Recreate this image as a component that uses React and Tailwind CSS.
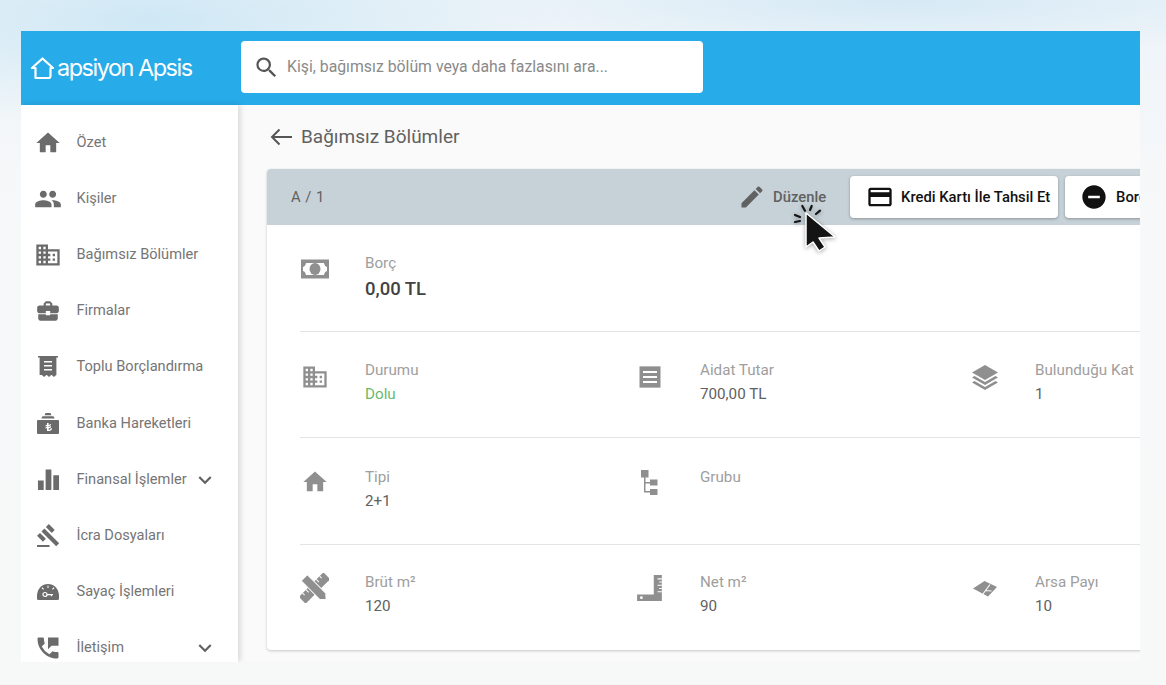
import React from "react";
import {
    MdHome, MdPeople, MdDomain, MdBusinessCenter, MdGavel, MdPermPhoneMsg,
    MdExpandMore, MdSearch, MdEdit, MdCreditCard, MdRemoveCircle,
} from "react-icons/md";

const ReceiptIcon = ({size = 24}) => (
    <svg width={size} height={size} viewBox="0 0 24 24" fill="currentColor">
        <path d="M2 1h20v1.400h-1.600V20c-1 0-1.400 1.800-2.400 1.800S16.400 20 15.400 20s-1.400 1.800-2.400 1.800S11.600 20 10.600 20s-1.400 1.800-2.400 1.800S6.600 20 5.600 20c-.6 0-1 0-2 0V2.400H2z"/>
        <path fill="#fff" d="M8 6h8v1.600H8zM8 10h8v1.600H8zM8 14h8v1.600H8z"/>
    </svg>
);

const BankIcon = ({size = 24}) => (
    <svg width={size} height={size} viewBox="0 0 24 24" fill="currentColor">
        <path d="M9.500 1h5l1 2.200h-7zM6.500 4.200h11l1.200 2.200H5.300zM2 8h20a1 1 0 0 1 1 1v12a1 1 0 0 1-1 1H2a1 1 0 0 1-1-1V9a1 1 0 0 1 1-1z"/>
        <path fill="#fff" d="M11 11h1.600v2l2.400-1v1.300l-2.400 1v.8l2.400-1v1.300l-2.400 1v1.300c1.300 0 2-.6 2.200-1.500h1.300c-.2 1.700-1.600 2.900-3.500 2.900H11v-3l-1.500.6v-1.300l1.500-.6v-.8l-1.500.6v-1.300l1.500-.6z"/>
    </svg>
);

const BarsIcon = ({size = 24}) => (
    <svg width={size} height={size} viewBox="0 0 24 24" fill="currentColor">
        <path d="M1 13h6v10H1zM9 1.500h6V23H9zM17 7.500h6V23h-6z"/>
    </svg>
);

const MeterIcon = ({size = 24}) => (
    <svg width={size} height={size} viewBox="0 0 24 24" fill="currentColor">
        <path d="M12 4C6 4 1.500 8.500 1 15v3.500A1.500 1.500 0 0 0 2.500 20h19a1.500 1.500 0 0 0 1.500-1.500V15C22.500 8.500 18 4 12 4z"/>
        <path fill="#fff" d="M11.500 5.500h1v2.500h-1zM5.500 8l.8-.7 1.700 1.800-.8.7zM18.500 8l-.8-.7-1.700 1.800.8.7z"/>
        <circle cx="9" cy="14.500" r="2" fill="none" stroke="#fff" strokeWidth="1.200"/>
        <path fill="#fff" d="M11 14h6v1.200h-1v1h-1.200v-1H11z"/>
    </svg>
);

const MoneyIcon = ({size = 28}) => (
    <svg width={size} height={size} viewBox="0 0 28 28" fill="currentColor">
        <path d="M0 4.500h28v19H0z"/>
        <path fill="#fff" d="M5 8h18c.4 2.500 1.500 3.500 3 4v4c-1.500.5-2.600 1.500-3 4H5c-.4-2.500-1.500-3.500-3-4v-4c1.500-.5 2.600-1.500 3-4z"/>
        <ellipse cx="14" cy="14" rx="5.500" ry="6"/>
    </svg>
);

const AidatIcon = ({size = 24}) => (
    <svg width={size} height={size} viewBox="0 0 24 24" fill="currentColor">
        <path d="M1.500 1h21v22h-21z"/>
        <path stroke="#fff" strokeWidth="0.800" strokeDasharray="1 1" d="M1.500 1.400h21M1.500 22.600h21"/>
        <path fill="#fff" d="M5 6h14v2H5zM5 11h14v2H5zM5 16h14v2H5z"/>
    </svg>
);

const LayersIcon = ({size = 28}) => (
    <svg width={size} height={size} viewBox="0 0 28 28" fill="currentColor">
        <path d="M14 2 27 9.500 14 17 1 9.500z"/>
        <path d="M3.500 13 14 19l10.500-6 2.500 1.600L14 22 1 14.600z"/>
        <path d="M3.500 18 14 24l10.500-6 2.500 1.600L14 27 1 19.600z"/>
    </svg>
);

const TreeIcon = ({size = 26}) => (
    <svg width={size} height={size} viewBox="0 0 26 26" fill="currentColor">
        <path d="M4 1h7.500v7.500H4zM13 10.500h7.500V16.500H13zM13 20h7.500v6H13z"/>
        <path d="M7 8h1.500v5H13v1.500H8.500V22H13v1.500H7z"/>
    </svg>
);

const PencilRulerIcon = ({size = 30}) => (
    <svg width={size} height={size} viewBox="0 0 30 30" fill="currentColor">
        <g transform="rotate(45 15 15)">
            <path d="M10 -3h10v36H10z"/>
            <path fill="#fff" d="M10 2h3v1h-3zM10 7h4v1h-4zM10 22h4v1h-4zM10 27h3v1h-3z"/>
        </g>
        <g transform="rotate(-45 15 15)">
            <path stroke="#fff" strokeWidth="1" d="M10.500 0h9v27l-4.500 5-4.500-5z"/>
        </g>
    </svg>
);

const SquareRulerIcon = ({size = 28}) => (
    <svg width={size} height={size} viewBox="0 0 26 26" fill="currentColor">
        <path d="M16.500 1H24v24H1v-6h15.500z"/>
        <path fill="#fff" d="M20 4h4v1h-4zM21.500 7H24v1h-2.500zM20 10h4v1h-4zM21.500 13H24v1h-2.500zM20 16h4v1h-4z"/>
        <circle cx="5" cy="22" r="1.300" fill="#fff"/>
    </svg>
);

const LandIcon = ({size = 26}) => (
    <svg width={size} height={size} viewBox="0 0 26 26" fill="currentColor">
        <path d="M1 13.500 12.500 6 25 12 16 21.500z"/>
        <path fill="none" stroke="#fff" strokeWidth="1.100" d="M13.500 15.500 18 9.500M13.500 15.500l6 .5M13.500 15.500 11 19"/>
    </svg>
);

const CursorIcon = () => (
    <svg width="46" height="54" viewBox="0 0 46 54" className="drop-shadow-[0_1px_2px_rgba(0,0,0,0.35)]">
        <path d="M15 12 L15 46 L22 41 L28 50 L34 46 L28 37 L44 36 Z" fill="#141414" stroke="#fff" strokeWidth="1.500" strokeLinejoin="round"/>
        <path d="M4 14l5 2M4 21l5-1M11.300 5 14 9.700M20.700 5 19 9M29 9.700 25 13" stroke="#141414" strokeWidth="2.200" strokeLinecap="round"/>
    </svg>
);

const menu = [
    {label: "Özet", Icon: MdHome, size: 28},
    {label: "Kişiler", Icon: MdPeople, size: 28},
    {label: "Bağımsız Bölümler", Icon: MdDomain, size: 28},
    {label: "Firmalar", Icon: MdBusinessCenter, size: 26},
    {label: "Toplu Borçlandırma", Icon: ReceiptIcon, size: 24},
    {label: "Banka Hareketleri", Icon: BankIcon, size: 24},
    {label: "Finansal İşlemler", Icon: BarsIcon, size: 23, arrow: true},
    {label: "İcra Dosyaları", Icon: MdGavel, size: 25},
    {label: "Sayaç İşlemleri", Icon: MeterIcon, size: 24},
    {label: "İletişim", Icon: MdPermPhoneMsg, size: 28, arrow: true},
];

const rows = [
    {
        box: "h-[107px] pt-[28px]",
        icon: "mt-[2px]",
        cells: [{label: "Borç", value: "0,00 TL", Icon: MoneyIcon, size: 28, big: true}],
    },
    {
        box: "h-[106px] pt-[28px]",
        icon: "mt-[3px]",
        cells: [
            {label: "Durumu", value: "Dolu", Icon: MdDomain, size: 28, green: true},
            {label: "Aidat Tutar", value: "700,00 TL", Icon: AidatIcon, size: 24},
            {label: "Bulunduğu Kat", value: "1", Icon: LayersIcon, size: 28},
        ],
    },
    {
        box: "h-[107px] pt-[29px]",
        icon: "mt-[1px]",
        cells: [
            {label: "Tipi", value: "2+1", Icon: MdHome, size: 28},
            {label: "Grubu", value: "", Icon: TreeIcon, size: 26},
        ],
    },
    {
        box: "h-[105px] pt-[27px]",
        icon: "mt-[2px]",
        cells: [
            {label: "Brüt m²", value: "120", Icon: PencilRulerIcon, size: 30},
            {label: "Net m²", value: "90", Icon: SquareRulerIcon, size: 28},
            {label: "Arsa Payı", value: "10", Icon: LandIcon, size: 26},
        ],
    },
];

function Cell({label, value, Icon, size, big, green, iconClass}) {
    return (
        <div className="w-[335px] shrink-0 flex">
            <div className={`w-[29px] h-[28px] shrink-0 flex items-center justify-center text-[#8f8f8f] ${iconClass}`}>
                <Icon size={size}/>
            </div>
            <div className="ml-[36px] whitespace-nowrap">
                <div className="text-[15.200px] leading-[20px] text-[#9e9e9e]">{label}</div>
                {big ? (
                    <div className="mt-[4px] text-[18.500px] leading-[24px] font-medium text-[#424242]">{value}</div>
                ) : (
                    <div className={`mt-[4px] text-[15.200px] leading-[20px] ${green ? "text-[#66bb6a]" : "text-[#616161]"}`}>
                        {value}
                    </div>
                )}
            </div>
        </div>
    );
}

export default function App() {
    return (
        <div className="relative w-[1166px] h-[685px] overflow-hidden pt-[31px] pl-[21px] font-['Roboto',sans-serif] bg-[radial-gradient(ellipse_420px_110px_at_150px_20px,#cfe8f5,transparent),radial-gradient(ellipse_420px_60px_at_900px_0px,#d5e9f5,transparent),linear-gradient(180deg,#eef4f9_0%,#f7f8f9_30%,#f7f8f8_100%)]">
            <div className="w-[1119px] h-[631px] flex flex-col overflow-hidden bg-[#fafafa]">
                <header className="h-[74px] shrink-0 bg-[#28abe9] flex items-center">
                    <div className="w-[220px] shrink-0 pl-[9px] flex items-center text-white">
                        <svg width="25" height="25" viewBox="0 0 25 25" fill="none" stroke="currentColor" strokeWidth="2.200" strokeLinejoin="round" strokeLinecap="round">
                            <path d="M12.500 2.500 2 12h3.500v10h13a2 2 0 0 0 2-2v-8H23z"/>
                        </svg>
                        <span className="ml-[2px] text-[23.500px] leading-none tracking-[-1.500px] font-['Inter',sans-serif] font-normal">apsiyon Apsis</span>
                    </div>
                    <div className="w-[462px] h-[52px] mb-[2px] bg-white rounded-[4px] flex items-center pl-[12px] text-[#616161]">
                        <MdSearch size={27} className="text-[#555]"/>
                        <span className="ml-[7px] text-[15.800px] text-[#8a8a8a]">Kişi, bağımsız bölüm veya daha fazlasını ara...</span>
                    </div>
                </header>
                <div className="flex-1 flex min-h-0">
                    <aside className="relative z-10 w-[217px] shrink-0 bg-white shadow-[2px_0_6px_rgba(0,0,0,0.15)] pt-[10px] overflow-hidden">
                        {menu.map(({label, Icon, size, arrow}) => (
                            <div key={label} className="h-[56.100px] shrink-0 flex items-center text-[#757575]">
                                <div className="w-[54px] h-full flex items-center justify-center shrink-0 text-[#6b6b6b]">
                                    <Icon size={size}/>
                                </div>
                                <span className="ml-[1.500px] text-[14.600px] whitespace-nowrap">{label}</span>
                                {arrow && <MdExpandMore size={26} className="ml-auto mr-[20px] text-[#616161]"/>}
                            </div>
                        ))}
                    </aside>
                    <main className="flex-1 min-w-0 overflow-hidden pl-[29px]">
                        <div className="h-[64px] flex items-center pl-[3px] text-[#555]">
                            <svg width="23" height="18" viewBox="0 0 23 18" fill="none" stroke="currentColor" strokeWidth="2">
                                <path d="M22 9H2M9.500 1.500 2 9l7.500 7.500"/>
                            </svg>
                            <span className="ml-[8px] text-[19px] text-[#616161]">Bağımsız Bölümler</span>
                        </div>
                        <div className="w-[1000px] h-[481px] bg-white rounded-[4px] shadow-[0_1px_3px_rgba(0,0,0,0.2)]">
                            <div className="h-[56px] bg-[#c6d2d8] rounded-t-[4px] flex items-center pl-[24px]">
                                <span className="w-[32px] shrink-0 text-[14.800px] text-[#616161] tracking-[0.500px] whitespace-nowrap">A / 1</span>
                                <div className="ml-[415px] flex items-center text-[#616161]">
                                    <MdEdit size={28}/>
                                    <span className="ml-[7px] text-[14.800px] font-medium">Düzenle</span>
                                </div>
                                <div className="ml-[24px] w-[208px] h-[42px] shrink-0 bg-white rounded-[4px] shadow-[0_1px_3px_rgba(0,0,0,0.3)] flex items-center pl-[16px] text-[#111]">
                                    <MdCreditCard size={28}/>
                                    <span className="ml-[7px] text-[14.800px] font-medium whitespace-nowrap">Kredi Kartı İle Tahsil Et</span>
                                </div>
                                <div className="ml-[7px] w-[200px] h-[42px] shrink-0 bg-white rounded-[4px] shadow-[0_1px_3px_rgba(0,0,0,0.3)] flex items-center pl-[15px] text-[#111]">
                                    <MdRemoveCircle size={28}/>
                                    <span className="ml-[8px] text-[14.800px] font-medium whitespace-nowrap">Borç Ekle</span>
                                </div>
                            </div>
                            <div className="pl-[33px]">
                                {rows.map((row, i) => (
                                    <div key={i} className={`${row.box} flex ${i < rows.length - 1 ? "border-b border-[#e4e4e4]" : ""}`}>
                                        {row.cells.map((cell) => (
                                            <Cell key={cell.label} {...cell} iconClass={row.icon}/>
                                        ))}
                                    </div>
                                ))}
                            </div>
                        </div>
                    </main>
                </div>
            </div>
            <div className="absolute left-[791px] top-[201px] z-20">
                <CursorIcon/>
            </div>
        </div>
    );
}
